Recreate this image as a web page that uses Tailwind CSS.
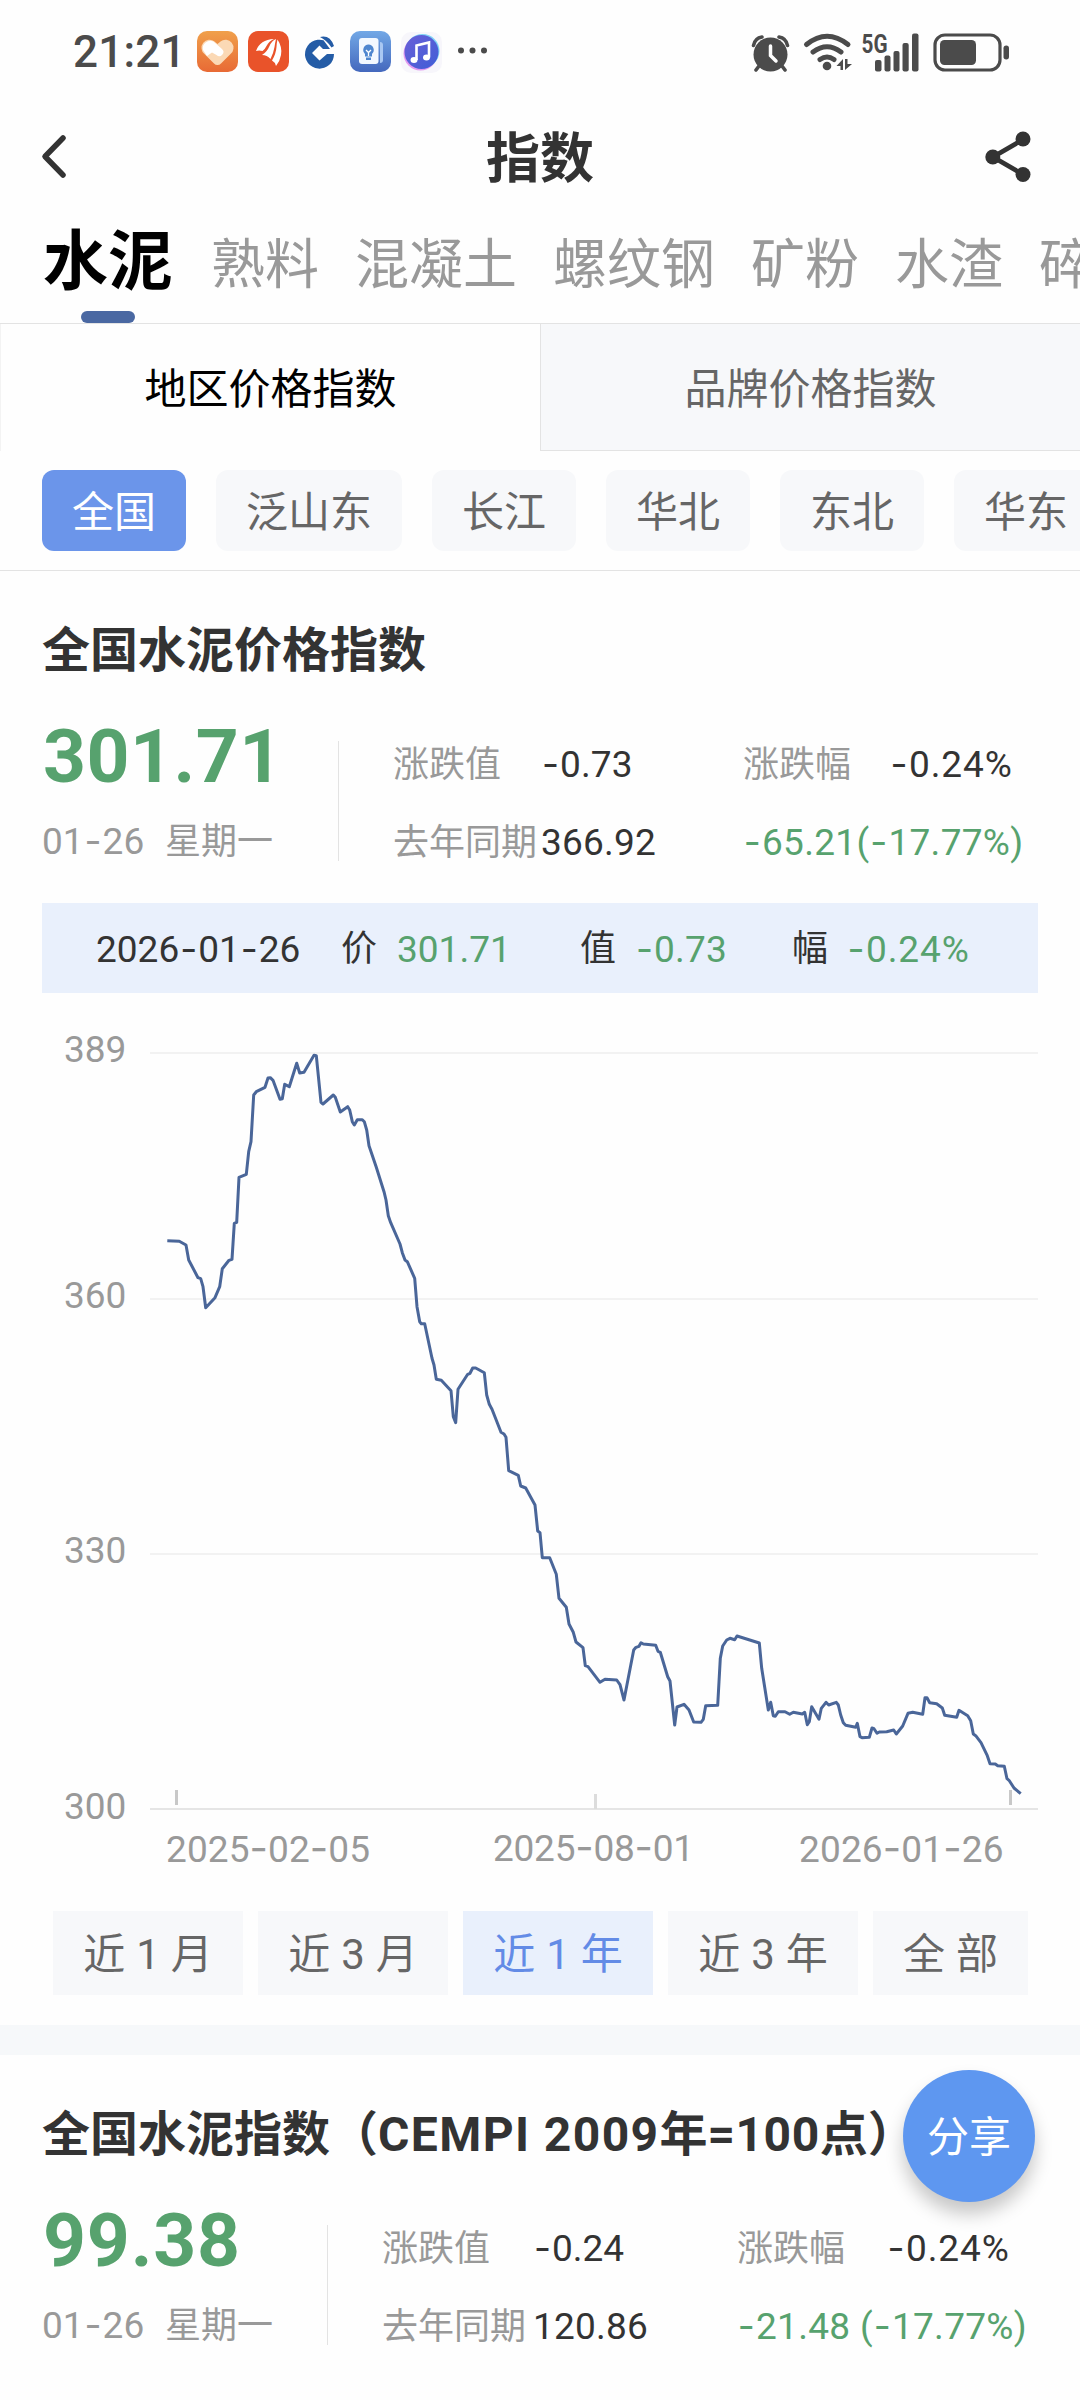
<!DOCTYPE html>
<html lang="zh-CN">
<head>
<meta charset="utf-8">
<title>指数</title>
<script src="https://cdn.jsdelivr.net/npm/@tailwindcss/browser@4"></script>
</head>
<body class="bg-[#fefefe]">
<div class="relative w-[1080px] h-[2400px] overflow-hidden bg-[#fefefe] text-[#333] font-[Roboto,'Noto_Sans_CJK_SC',sans-serif] leading-none whitespace-nowrap">

  <!-- status bar -->
  <div class="h-[104px] flex items-center justify-between pl-[73px] pr-[70px] text-[#4b4b4b]">
    <div class="flex items-center">
      <span class="w-[124px] text-[44px] font-medium tracking-[0.2px]">21:21</span>
      <svg class="w-[290px] h-[42px]" viewBox="197 31 290 42">
        <defs>
          <linearGradient id="or" x1="0" y1="0" x2="0" y2="1"><stop offset="0" stop-color="#f0a04b"/><stop offset="1" stop-color="#e86a35"/></linearGradient>
          <linearGradient id="bl" x1="0" y1="0" x2="0" y2="1"><stop offset="0" stop-color="#72a8e6"/><stop offset="1" stop-color="#4468bd"/></linearGradient>
          <linearGradient id="mu" x1="0" y1="0" x2="1" y2="1"><stop offset="0" stop-color="#6a5fd8"/><stop offset="1" stop-color="#3f5ed6"/></linearGradient>
        </defs>
        <rect x="197" y="31" width="41" height="41" rx="10" fill="url(#or)"/>
        <path d="M217.500 65 Q215.500 65 214 63.500 L204.500 54 A8 8 0 0 1 214.500 41.500 L217.500 44 L220.500 41.500 A8 8 0 0 1 230.500 54 L221 63.500 Q219.500 65 217.500 65 Z" fill="#fbd9b5"/>
        <path d="M203 50 A7.500 7.500 0 0 1 213.500 41.500 L222 49 A4 4 0 0 1 216.500 55 L212 52.500 L207 56 Z" fill="#fff"/>
        <rect x="248" y="31" width="41" height="41" rx="10" fill="#e9532a"/>
        <path d="M256 51 Q260 39.500 274 39 Q269 41 266.500 46 Q264.500 50 262.500 51 Q259 50 256 51 Z" fill="#fff"/>
        <path d="M262 55 Q267 52 269.500 46 Q272 40.500 276 39 Q275 43 274.500 47 Q273.500 53 270.500 59 Q267 55 262 55 Z" fill="#fff"/>
        <path d="M272 60.500 Q276 54 276.500 47 Q276.800 42 277.500 39.500 Q282.500 47 281 55 Q280 61 276 66 Q275 62 272 60.500 Z" fill="#fff"/>
        <path d="M323.500 40.200 A14.500 14.500 0 1 0 334 54 L327 54 L319.500 60.500 L312 53 L319.500 45.500 L323 49 L330 49 Z" fill="#245ca6"/>
        <path d="M320 37 Q330 34.500 334 46 L331.500 47.500 Q327 40.500 320 37 Z" fill="#245ca6"/>
        <rect x="350" y="31" width="41" height="41" rx="10" fill="url(#bl)"/>
        <path d="M380 42 Q383 42 383 45 V60 Q383 63 380 63 Z" fill="#a9c8f2"/>
        <rect x="359" y="38" width="19.500" height="26" rx="3" fill="#f3f8ff"/>
        <path d="M368.500 44.500 a5.500 5.500 0 0 1 3.500 9.500 v2.500 h-7 v-2.500 a5.500 5.500 0 0 1 3.500 -9.500 z M366 57.500 h5 v2.500 h-5 z" fill="#4f86cf"/>
        <path d="M366 50 l2.500 2.500 l2.500 -2.500 M368.500 52 v4" stroke="#fff" stroke-width="1.300" fill="none"/>
        <rect x="401" y="32" width="41" height="41" rx="10" fill="#f7f6fb"/>
        <circle cx="420.500" cy="53.500" r="17" fill="#e29af0"/><circle cx="422.500" cy="51" r="17" fill="#7fd3f5"/>
        <circle cx="421.500" cy="52" r="17" fill="url(#mu)"/>
        <path d="M416.500 60 V45.500 L429 42.500 V57.500" fill="none" stroke="#fff" stroke-width="2.600"/>
        <ellipse cx="414" cy="60" rx="3.500" ry="2.900" fill="#fff"/><ellipse cx="426.500" cy="57.500" rx="3.500" ry="2.900" fill="#fff"/>
        <circle cx="461" cy="50.500" r="3" fill="#4b4b4b"/><circle cx="472.500" cy="50.500" r="3" fill="#4b4b4b"/><circle cx="484" cy="50.500" r="3" fill="#4b4b4b"/>
      </svg>
    </div>
    <svg class="w-[258px] h-[40px] overflow-visible" viewBox="752 30 258 40" fill="#4b4b4b">
      <circle cx="770.500" cy="52.500" r="17"/>
      <path d="M753.500 43.500 Q755 36 762 35 M787.500 43.500 Q786 36 779 35 M759 64 L756 68 M782 64 L785 68" stroke="#4b4b4b" stroke-width="3.600" fill="none" stroke-linecap="round"/>
      <path d="M770.500 44 V53.500 L776 59" stroke="#fefefe" stroke-width="3.500" fill="none" stroke-linecap="round"/>
      <path d="M806.500 42.500 Q827 26 848 42.500 M813 50 Q827 39.500 841 50 M820 57.500 Q827 52.500 834 57.500" stroke="#4b4b4b" stroke-width="5" fill="none" stroke-linecap="round"/>
      <circle cx="827" cy="64" r="4.300"/>
      <path d="M843 57 V68 H840.500 V64 H836.500 Z M845 68 V57 H847.500 V62 H852 Z"/>
      <text x="861.500" y="50.500" font-family="Roboto" font-weight="700" font-size="25" textLength="26" lengthAdjust="spacingAndGlyphs">5G</text>
      <rect x="875" y="58" width="6.500" height="11.500" rx="2"/><rect x="884.500" y="53.500" width="6" height="16" rx="2"/><rect x="893.500" y="49" width="6" height="20.500" rx="2"/><rect x="902.500" y="41" width="6.200" height="28.500" rx="2"/><rect x="912" y="31.500" width="6.500" height="38" rx="2"/>
      <rect x="935" y="33" width="65" height="35" rx="10" fill="none" stroke="#4b4b4b" stroke-width="3.200"/>
      <rect x="940" y="38" width="36" height="25" rx="4.500"/><rect x="1003.500" y="43.500" width="5.500" height="14" rx="2.700"/>
    </svg>
  </div>

  <!-- title bar -->
  <div class="h-[106px] flex items-center justify-between pl-[40px] pr-[46px]">
    <svg class="w-[30px] h-[46px]" viewBox="0 0 30 46" fill="none" stroke="#333" stroke-width="5.500" stroke-linecap="round" stroke-linejoin="round"><path d="M23 4 L5 22.500 L23 41"/></svg>
    <h1 class="text-[54px] font-bold ml-[26px] pt-[5px]">指数</h1>
    <svg class="w-[50px] h-[54px]" viewBox="984 130 50 54" fill="#333"><path d="M1023 139.500 L993 157 L1023 174.500" fill="none" stroke="#333" stroke-width="4.800"/><circle cx="992.800" cy="157" r="7.500"/><circle cx="1023" cy="139" r="7.500"/><circle cx="1023" cy="174.500" r="7.500"/></svg>
  </div>

  <!-- material tabs -->
  <div class="h-[114px] flex items-end border-b border-[#e3e3e3] pl-[43px] text-[54px] text-[#999]">
    <div class="w-[168px] shrink-0 h-[102px] flex flex-col items-start justify-between">
      <span class="text-[65px] font-bold text-black pt-[9px]">水泥</span>
      <span class="ml-[38px] w-[54px] h-[12px] shrink-0 rounded-full bg-[#4a68a2]"></span>
    </div>
    <div class="flex gap-[36px] pb-[30px]"><span>熟料</span><span>混凝土</span><span>螺纹钢</span><span>矿粉</span><span>水渣</span><span>碎石</span></div>
  </div>

  <!-- index type switch -->
  <div class="h-[127px] grid grid-cols-2 text-[42px]">
    <div class="flex items-center justify-center pt-[4px] text-black border-l border-[#f3f3f3]">地区价格指数</div>
    <div class="flex items-center justify-center pt-[5px] text-[#666] bg-[#f7f8fa] border-l border-b border-[#e3e3e3]">品牌价格指数</div>
  </div>

  <!-- region chips -->
  <div class="h-[120px] flex items-center gap-[30px] pl-[42px] border-b border-[#e3e3e3] text-[42px] text-[#666]">
    <span class="h-[81px] px-[30px] pt-[4px] shrink-0 flex items-center rounded-xl bg-[#6b95ea] text-white">全国</span>
    <span class="h-[81px] px-[30px] pt-[4px] shrink-0 flex items-center rounded-xl bg-[#f7f8fa]">泛山东</span>
    <span class="h-[81px] px-[30px] pt-[4px] shrink-0 flex items-center rounded-xl bg-[#f7f8fa]">长江</span>
    <span class="h-[81px] px-[30px] pt-[4px] shrink-0 flex items-center rounded-xl bg-[#f7f8fa]">华北</span>
    <span class="h-[81px] px-[30px] pt-[4px] shrink-0 flex items-center rounded-xl bg-[#f7f8fa]">东北</span>
    <span class="h-[81px] px-[30px] pt-[4px] shrink-0 flex items-center rounded-xl bg-[#f7f8fa]">华东</span>
  </div>

  <!-- price index -->
  <section>
    <h2 class="h-[170px] pt-[56px] pl-[42px] text-[48px] font-bold leading-[48px]">全国水泥价格指数</h2>
    <div class="h-[120px] flex">
      <div class="w-[338px] pl-[43px] -mt-[22px]">
        <div class="h-[75px] text-[75px] font-bold text-[#57a26e] tracking-[0.5px]">301.71</div>
        <div class="mt-[28px] -ml-px h-[38px] flex items-center text-[37px] text-[#999]"><span class="w-[123px]">01<span class="inline-block w-[19px] text-center font-[Inter]">-</span>26</span><span class="text-[36px] pt-[2px]">星期一</span></div>
      </div>
      <div class="w-px h-[120px] bg-[#e3e3e3]"></div>
      <div class="pl-[54px] pt-[4px] grid grid-cols-[148px_202px_147px_150px] grid-rows-[38px_38px] gap-y-[40px] items-center text-[37px]">
        <span class="text-[36px] text-[#999] pt-[2px]">涨跌值</span><span class="tracking-[0.1px]"><span class="inline-block w-[19px] text-center font-[Inter]">-</span>0.73</span><span class="text-[36px] text-[#999] pt-[2px]">涨跌幅</span><span class="tracking-[0.9px]"><span class="inline-block w-[19px] text-center font-[Inter]">-</span>0.24%</span>
        <span class="text-[36px] text-[#999] pt-[2px]">去年同期</span><span class="tracking-[0.2px]">366.92</span><span class="col-span-2 text-[#57a26e] tracking-[0.3px]"><span class="inline-block w-[19px] text-center font-[Inter]">-</span>65.21(<span class="inline-block w-[19px] text-center font-[Inter]">-</span>17.77%)</span>
      </div>
    </div>

    <div class="mt-[42px] mx-[42px] h-[90px] bg-[#e9f0fc] flex items-center pl-[54px] text-[37px] pt-[2px]">
      <span class="w-[245px]">2026<span class="inline-block w-[19px] text-center font-[Inter]">-</span>01<span class="inline-block w-[19px] text-center font-[Inter]">-</span>26</span>
      <span class="w-[56px] text-[36px]">价</span><span class="w-[183px] text-[#57a26e]">301.71</span>
      <span class="w-[55px] text-[36px]">值</span><span class="w-[157px] text-[#57a26e] tracking-[0.2px]"><span class="inline-block w-[19px] text-center font-[Inter]">-</span>0.73</span>
      <span class="w-[55px] text-[36px]">幅</span><span class="text-[#57a26e] tracking-[0.9px]"><span class="inline-block w-[19px] text-center font-[Inter]">-</span>0.24%</span>
    </div>

    <!-- one-year trend -->
    <svg class="block mt-[27px] ml-[42px] w-[998px] h-[860px]" viewBox="42 1020 998 860" font-family="Roboto" font-size="37" fill="#999">
      <path d="M150 1053 H1038 M150 1299 H1038 M150 1554 H1038" stroke="#f2f2f2" stroke-width="2"/>
      <path d="M150 1809 H1038" stroke="#e5e5e5" stroke-width="2"/>
      <path d="M176.500 1790 V1805 M1010.500 1790 V1805" stroke="#c8c8c8" stroke-width="3"/>
      <path d="M595.500 1794 V1809" stroke="#dcdcdc" stroke-width="3"/>
      <text x="64" y="1062">389</text><text x="64" y="1308">360</text><text x="64" y="1563">330</text><text x="64" y="1819">300</text>
      <text x="166" y="1862" textLength="204">2025<tspan font-family="Inter" font-size="40">-</tspan>02<tspan font-family="Inter" font-size="40">-</tspan>05</text>
      <text x="493" y="1861" textLength="201">2025<tspan font-family="Inter" font-size="40">-</tspan>08<tspan font-family="Inter" font-size="40">-</tspan>01</text>
      <text x="799" y="1862" textLength="204.500">2026<tspan font-family="Inter" font-size="40">-</tspan>01<tspan font-family="Inter" font-size="40">-</tspan>26</text>
      <polyline fill="none" stroke="#4a6699" stroke-width="3" stroke-linejoin="round" points="167.3,1240.7 179.3,1241.3 186,1245 188.7,1260 198,1277.7 200.7,1278.7 203,1286.7 205.7,1307.7 215,1297.7 219.7,1286.7 222.3,1268.7 229,1260.3 232,1259.3 234.3,1223.3 236.7,1222.3 239,1177.3 246.3,1174.3 248.7,1151.7 251,1141.7 253.7,1095 256.3,1091.7 265,1087.3 268,1078 270.3,1077.7 273,1080.3 280,1099.3 282.3,1098.7 284.7,1084.3 289.3,1086.7 296.7,1063.3 299.7,1073 304,1072.3 314,1055.3 316.3,1055.7 321,1102.3 323,1104 333.3,1095 335.3,1097.3 340.3,1112 347.7,1106.7 349.7,1110 352.3,1121.7 354.3,1125 357.3,1119.7 362.3,1119.7 364.3,1121.7 366.7,1130 369,1145.7 376.3,1167.3 384,1191.7 386,1200 388.3,1215.7 390.7,1222.7 400,1244 402.3,1252.7 405,1260 407.3,1261.7 414.7,1278.3 417,1306.7 419.7,1321.7 421.3,1323.7 424.7,1323.7 432,1358.3 434,1365 436.3,1379.3 441.3,1380.3 451,1390.7 453.3,1416.7 455.7,1422.7 458,1389.3 467.7,1374.3 470,1373.3 472.7,1368 475.7,1368 484.3,1372.7 486.7,1395 489.3,1404.3 492,1409.3 501,1432.3 504,1434 506,1437.3 508.7,1470.7 518.3,1475.3 520.7,1486 525.7,1488 535,1505 537.7,1531 540,1532.7 542.3,1557.7 549.7,1557.7 556.3,1574.3 559,1598.3 566.3,1607.3 569,1624 573.3,1632.3 576,1642 583,1647.7 585.3,1665.7 588,1666.7 600,1682.3 605,1679.3 616.7,1680 620,1684.7 624,1700 633.7,1650 636,1647.3 639,1646.3 641,1642.7 643.3,1644 655.7,1645.3 658,1651.3 660.3,1652.3 667.7,1676.7 670,1681 674.7,1725 677,1707 684,1704.3 689,1710 693.7,1722 701,1722.3 703.3,1719.3 705.7,1705.7 717.7,1705.3 720.3,1658.3 722.7,1646 726.7,1640 730,1638.3 734.7,1639.7 737,1636 759.3,1643 761.7,1668.3 768.3,1710 770.7,1702.3 773.3,1715.7 775.3,1716.3 778.3,1711.7 785,1711.7 789.7,1714.3 793.3,1712.3 802.3,1714 804.7,1712.3 807.3,1724.7 809.3,1721.7 811.7,1706.7 819,1719.3 821.3,1708.3 826,1702.3 828.7,1705 836.3,1702.3 838.3,1705 840.7,1715 843.3,1722.7 845.7,1725.3 855.7,1727.3 857.3,1723.3 860,1736.7 862,1737.7 869.3,1737.3 872,1728 874,1728.7 877,1733.3 879.3,1732 886.7,1731.7 893.7,1730 896.3,1734 902.7,1726 908,1713.3 912.7,1712.3 922.7,1714.3 925,1697.7 927,1697.7 929.7,1702.7 936.7,1703.7 942.3,1708 944.7,1715.3 956.7,1717.3 959,1710.3 967.7,1715.7 970.7,1720.7 973.3,1734 975.7,1735.7 981,1742.7 987.3,1755.7 990,1763.7 995.3,1764 997.7,1765.7 1004.3,1766.3 1007,1778.7 1009,1780.3 1014,1788 1020.7,1793.7"/>
    </svg>

    <!-- range picker -->
    <div class="mt-[31px] pl-[53px] h-[84px] flex gap-[15px] text-[42px] text-[#666]">
      <span class="w-[190px] pt-[3px] flex items-center justify-center gap-[11px] bg-[#f7f8fa]"><span>近</span><span>1</span><span>月</span></span>
      <span class="w-[190px] pt-[3px] flex items-center justify-center gap-[11px] bg-[#f7f8fa]"><span>近</span><span>3</span><span>月</span></span>
      <span class="w-[190px] pt-[3px] flex items-center justify-center gap-[11px] bg-[#e9f0fc] text-[#638be6]"><span>近</span><span>1</span><span>年</span></span>
      <span class="w-[190px] pt-[3px] flex items-center justify-center gap-[11px] bg-[#f7f8fa]"><span>近</span><span>3</span><span>年</span></span>
      <span class="w-[155px] pt-[3px] flex items-center justify-center gap-[11px] bg-[#f7f8fa]"><span>全</span><span>部</span></span>
    </div>
  </section>

  <div class="mt-[30px] h-[30px] bg-[#f6f8fa]"></div>

  <!-- composite index -->
  <section>
    <h2 class="h-[170px] pt-[56px] pl-[42px] text-[48px] font-bold leading-[48px]">全国水泥指数（<span class="tracking-[1.4px]">CEMPI 2009</span>年<span class="tracking-[0.5px]">=100</span>点）</h2>
    <div class="h-[120px] flex">
      <div class="w-[327px] pl-[43px] -mt-[22px]">
        <div class="h-[75px] text-[75px] font-bold text-[#57a26e] tracking-[0.8px]">99.38</div>
        <div class="mt-[28px] -ml-px h-[38px] flex items-center text-[37px] text-[#999]"><span class="w-[123px]">01<span class="inline-block w-[19px] text-center font-[Inter]">-</span>26</span><span class="text-[36px] pt-[2px]">星期一</span></div>
      </div>
      <div class="w-px h-[120px] bg-[#e3e3e3]"></div>
      <div class="pl-[54px] pt-[4px] grid grid-cols-[151px_204px_150px_150px] grid-rows-[38px_38px] gap-y-[40px] items-center text-[37px]">
        <span class="text-[36px] text-[#999] pt-[2px]">涨跌值</span><span><span class="inline-block w-[19px] text-center font-[Inter]">-</span>0.24</span><span class="text-[36px] text-[#999] pt-[2px]">涨跌幅</span><span class="tracking-[0.9px]"><span class="inline-block w-[19px] text-center font-[Inter]">-</span>0.24%</span>
        <span class="text-[36px] text-[#999] pt-[2px]">去年同期</span><span class="tracking-[0.2px]">120.86</span><span class="col-span-2 text-[#57a26e] tracking-[0.3px]"><span class="inline-block w-[19px] text-center font-[Inter]">-</span>21.48 (<span class="inline-block w-[19px] text-center font-[Inter]">-</span>17.77%)</span>
      </div>
    </div>
  </section>

  <!-- floating share button -->
  <div class="absolute left-[903px] top-[2070px] size-[132px] rounded-full bg-[#5e97f0] text-white text-[42px] flex items-center justify-center pt-[3px] shadow-[0_12px_18px_rgba(0,0,0,0.22)]">分享</div>
</div>
</body>
</html>
